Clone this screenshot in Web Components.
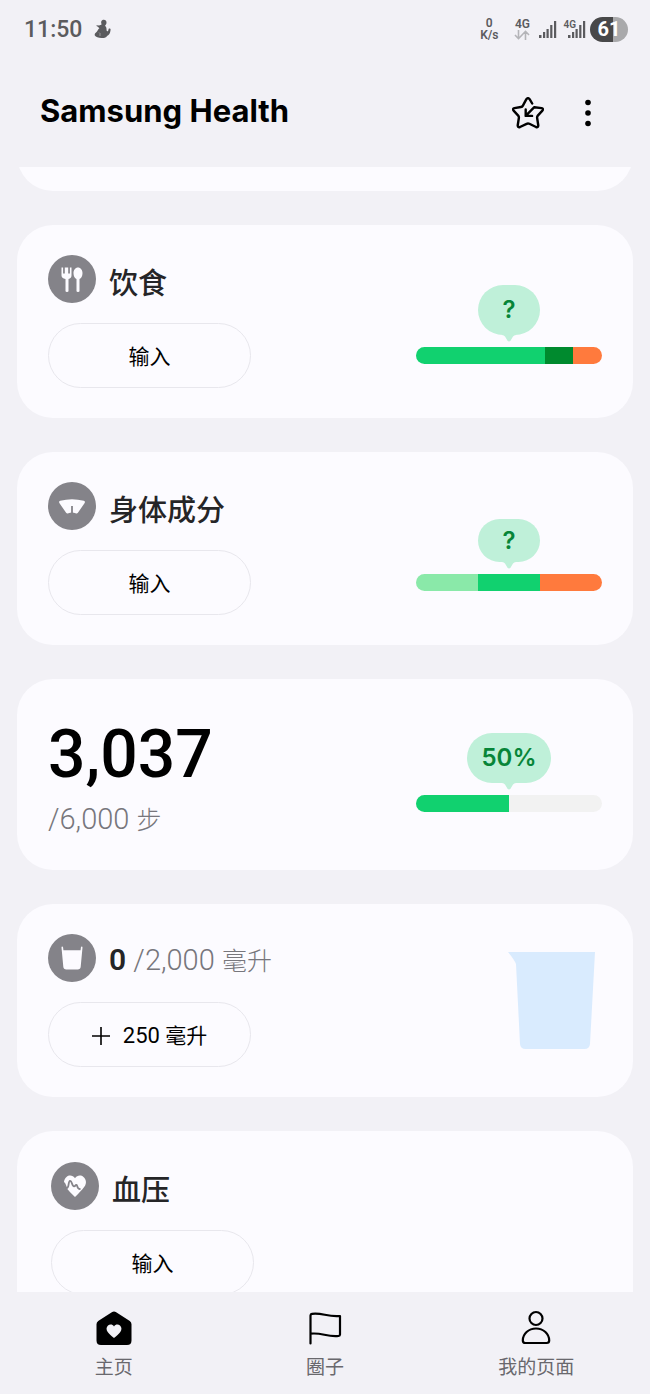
<!DOCTYPE html>
<html lang="zh-CN">
<head>
<meta charset="utf-8">
<meta name="viewport" content="width=device-width, initial-scale=1">
<title>Samsung Health</title>
<style>
  body {
    margin: 0;
    background: #f2f1f6;
    font-family: Roboto, "Noto Sans CJK SC", sans-serif;
    color: #252527;
  }
</style>
</head>
<body>
<health-app></health-app>

<script>
const ICONS = {
  food: `<svg viewBox="0 0 48 48" width="48" height="48"><circle cx="24" cy="24" r="24" fill="#848389"/>
    <g fill="#fcfbff"><path d="M13.5 12.5h1.6v6h1.7v-6h3.4v6h1.7v-6h1.6v8q0 2.6-3 3.4V36q0 1-1.500 1t-1.500-1V23.900q-4-.8-4-3.400z"/>
    <path d="M30 12.500c2.600 0 4.500 2.500 4.500 5.700 0 3-1.300 5-3 5.700V36q0 1-1.500 1t-1.500-1V23.900c-1.700-.7-3-2.700-3-5.700 0-3.200 1.900-5.700 4.500-5.700z"/></g></svg>`,
  body: `<svg viewBox="0 0 48 48" width="48" height="48"><circle cx="24" cy="24" r="24" fill="#848389"/>
    <path fill="#fcfbff" d="M11.500 21.200q-1.200-1.600.7-2.500 11.800-3 23.600 0 1.900.9.700 2.500l-6.600 9.600q-.9 1.200-2.300.5-3.600-1.800-7.200 0-1.400.7-2.300-.5z"/>
    <path stroke="#848389" stroke-width="1.800" d="M24 24v8"/></svg>`,
  water: `<svg viewBox="0 0 48 48" width="48" height="48"><circle cx="24" cy="24" r="24" fill="#848389"/>
    <path fill="#fcfbff" d="M13.500 13.500q0-.9.700-.9t.9.900l.3 2.700h17.200l.3-2.700q.2-.9.900-.9t.7.900l-1.800 19.300q-.3 2.700-3 2.700H18.300q-2.700 0-3-2.700z"/></svg>`,
  heart: `<svg viewBox="0 0 48 48" width="48" height="48"><circle cx="24" cy="24" r="24" fill="#848389"/>
    <path fill="#fcfbff" d="M24 16.300c2-3.200 6-3.400 8.500-1.400 3 2.500 3.300 6.700.8 9.900-2.300 3.200-5.300 6.200-9.300 10.300-4-4-7-7-9.300-10.300-2.500-3.200-2.200-7.400.8-9.900 2.500-2 6.500-1.800 8.500 1.400z"/>
    <path fill="none" stroke="#848389" stroke-width="1.800" stroke-linejoin="round" stroke-linecap="round" d="M12.500 21c2 0 1.500 5.200 3.500 5 2.300-.2 1-7 3-7.200 2.300 0 1.700 5.500 4 5.500 1.800 0 1-1.500 2.400-1.300 1.300.2.600 4 3.400 4"/></svg>`,
  home: `<svg viewBox="0 0 36 36" width="36" height="36"><path fill="#000" d="M15.800 2.200q2.200-1.500 4.400 0l13.600 8.900q1.700 1.200 1.700 3.200v16.200q0 4.500-4.500 4.500H5q-4.500 0-4.500-4.500V14.300q0-2 1.700-3.200z"/>
    <path fill="#f2f1f6" d="M18 16.500c1.400-2.300 4.300-2.400 6-.9 1.800 1.600 2 4.300.3 6.300-1.600 2-3.600 3.900-6.300 6.200-2.700-2.300-4.700-4.200-6.300-6.200-1.700-2-1.500-4.700.3-6.300 1.700-1.500 4.600-1.400 6 .9z"/></svg>`,
  flag: `<svg viewBox="0 0 36 36" width="36" height="36"><path fill="none" stroke="#000" stroke-width="2.200" stroke-linecap="round" stroke-linejoin="round" d="M3.500 33.500V5.500q0-1.500 1.500-1.700c10-1.500 15.500 3.500 28 2.200v18.500q0 1.300-1.500 1.500c-11.500 1.300-17-3.800-28-2.300"/></svg>`,
  person: `<svg viewBox="0 0 36 36" width="36" height="36"><g fill="none" stroke="#000" stroke-width="2.200"><circle cx="18" cy="8.500" r="6.500"/>
    <path stroke-linejoin="round" d="M4.800 30.500c0-6.500 5.700-12 13.200-12s13.200 5.500 13.200 12q0 2.500-2.500 2.500H7.300q-2.500 0-2.500-2.500z"/></g></svg>`
};

class StatusBar extends HTMLElement {
  constructor() {
    super();
    this.attachShadow({ mode: 'open' });
    this.shadowRoot.innerHTML = `
      <style>
        :host {
          display: flex;
          align-items: center;
          justify-content: space-between;
          height: 58px;
          padding: 0 22px 0 24px;
          color: #5b5b5e;
        }
        .side { display: flex; align-items: center; }
        svg { display: block; }
        .time { font-size: 23px; font-weight: 500; margin-right: 12px; }
        .speed, .net {
          font-size: 12px;
          line-height: 12px;
          font-weight: 600;
          text-align: center;
        }
        .speed { margin-right: 16px; }
        .net { margin-right: 9px; }
        .net svg { margin: 0 auto; }
        .second { display: flex; align-items: flex-start; margin: 0 4px 0 6px; }
        .second span { font-size: 10px; line-height: 10px; font-weight: 600; }
        .second svg { margin-left: -8px; }
        .battery {
          width: 38px;
          line-height: 25px;
          border-radius: 13px;
          background: linear-gradient(90deg, #484849 61%, #a9a9ab 61%);
          color: #fff;
          font-size: 20px;
          font-weight: 700;
          text-align: center;
        }
      </style>
      <div class="side">
        <span class="time">11:50</span>
        <svg viewBox="0 0 17 20" width="17" height="20" fill="#5b5b5e"><path d="M8.500 1c2-1 4.200.3 4 2.700 0 1.400-1 2.200-1.500 3 2 1.500 1.300 3.300 1.700 5 .8.900 1.400.6 1.700-.7.200-1 .4-1.500 1.400-1.400.9.100.9 1.100.6 2.300-.5 2.800-1.600 4.400-3.400 5-.7 1.500-2.200 2-4.700 2-3.800.1-6.300-.6-7.500-2.400C.2 15 1.700 13.800 3 12.600c.7-.8 1-2.200 2.400-3.300L3.500 7.500c-.8-.2-1.300-.6-.9-1.200l2.500.2C5.800 5.800 7.300 6 7.600 5.200 6.800 3.500 7 1.700 8.500 1z"/><path stroke="#a9a9ab" stroke-width=".8" fill="none" d="M5 13.500l1.500 1.500M5 16h2"/></svg>
      </div>
      <div class="side">
        <div class="speed">0<br>K/s</div>
        <div class="net">4G
          <svg viewBox="0 0 16 10" width="16" height="10" fill="none" stroke="#b4b4b8" stroke-width="1.600"><path d="M4.500 0v8.500M1 5l3.500 3.700L8 5M11.500 10V1.500M8 5l3.500-3.700L15 5"/></svg>
        </div>
        <svg viewBox="0 0 18 18" width="18" height="18" fill="#5b5b5e"><path d="M0 15h2.500v3H0zM4 12h2.200v6H4zM7.500 9h2.200v9H7.500zM11.200 5h2.200v13h-2.200zM15 1h2.200v17H15z"/></svg>
        <div class="second">
          <span>4G</span>
          <svg viewBox="0 0 18 18" width="18" height="18" fill="#5b5b5e"><path d="M0 15h2.500v3H0zM4 12h2.200v6H4zM7.500 9h2.200v9H7.500zM11.200 5h2.200v13h-2.200zM15 1h2.200v17H15z"/></svg>
        </div>
        <div class="battery">61</div>
      </div>
    `;
  }
}

class AppHeader extends HTMLElement {
  constructor() {
    super();
    this.attachShadow({ mode: 'open' });
    this.shadowRoot.innerHTML = `
      <style>
        :host {
          display: flex;
          align-items: center;
          height: 109px;
          padding: 0 46px 0 40px;
        }
        h1 {
          flex: 1;
          margin: 0 0 4px;
          font-family: Inter, sans-serif;
          font-size: 31px;
          font-weight: 700;
          color: #000;
        }
        button {
          display: block;
          padding: 0;
          border: none;
          background: none;
          cursor: pointer;
        }
        .more { margin-left: 28px; }
        svg { display: block; }
      </style>
      <h1><slot></slot></h1>
      <button aria-label="收藏">
        <svg viewBox="0 0 32 32" width="32" height="32" fill="none" stroke="#000" stroke-width="2.400" stroke-linecap="round" stroke-linejoin="round"><path d="M20.200 6.500 17.600 2.200q-1.600-2.100-3.200 0l-3.500 6.400q-.6 1.200-2 1.400l-6.500 1.100q-2.300.6-.8 2.500l4.600 5q.8.900.7 2.200L5.700 28.500q.1 2.300 2.300 1.500l6.600-3.200q1.400-.7 2.800 0L24 30q2.200.8 2.300-1.500l-1.200-7.700q-.1-1.300.7-2.200l4.600-5q1.500-1.900-.8-2.500L22.300 10.200 13.700 18.800M13.700 12.500v6.400h6.400"/></svg>
      </button>
      <button class="more" aria-label="更多">
        <svg viewBox="0 0 32 32" width="32" height="32"><circle cx="16" cy="5.500" r="2.800"/><circle cx="16" cy="16" r="2.800"/><circle cx="16" cy="26.500" r="2.800"/></svg>
      </button>
    `;
  }
}

class HealthCard extends HTMLElement {
  constructor() {
    super();
    this.attachShadow({ mode: 'open' });
    const icon = ICONS[this.getAttribute('icon')] || '';
    this.shadowRoot.innerHTML = `
      <style>
        :host {
          display: flex;
          justify-content: space-between;
          padding: 30px 31px;
          border-radius: 36px;
          background: #fcfbff;
        }
        :host([inset]) { padding: 31px 34px; }
        .main { display: flex; flex-direction: column; gap: 20px; }
        .head { display: flex; align-items: center; gap: 13px; }
        .head:not(.has-icon) { display: none; }
        svg { display: block; }
        h2 {
          margin: 10px 0 0;
          font-size: 29px;
          line-height: 36px;
          font-weight: 500;
        }
        :host([measure]) h2 { margin-top: 6px; }
      </style>
      <div class="main">
        <div class="head ${icon ? 'has-icon' : ''}">${icon}<h2><slot name="title"></slot></h2></div>
        <slot></slot>
      </div>
      <slot name="chart"></slot>
    `;
  }
}

class PillButton extends HTMLElement {
  constructor() {
    super();
    this.attachShadow({ mode: 'open' });
    this.shadowRoot.innerHTML = `
      <style>
        :host { display: block; }
        button {
          display: flex;
          align-items: center;
          justify-content: center;
          gap: 13px;
          width: 203px;
          height: 65px;
          padding: 2px 0 0;
          border: 1px solid #e8e7ed;
          border-radius: 33px;
          background: none;
          font: inherit;
          font-size: 21px;
          line-height: 30px;
          color: #000;
          cursor: pointer;
        }
      </style>
      <button>
        ${this.hasAttribute('plus') ? '<svg viewBox="0 0 18 18" width="18" height="18" stroke="#000" stroke-width="1.600"><path d="M9 0v18M0 9h18"/></svg>' : ''}
        <span><slot></slot></span>
      </button>
    `;
  }
}

// parts="color:grow,color:grow"
class GaugeBar extends HTMLElement {
  constructor() {
    super();
    this.attachShadow({ mode: 'open' });
    const parts = this.getAttribute('parts').split(',').map(p => {
      const [color, grow] = p.split(':');
      return `<i style="flex:${grow};background:${color}"></i>`;
    }).join('');
    this.shadowRoot.innerHTML = `
      <style>
        :host {
          display: flex;
          flex-direction: column;
          align-items: center;
          align-self: flex-end;
          gap: 12px;
          width: 186px;
          padding-bottom: 24px;
        }
        :host([raised]) { padding-bottom: 28px; }
        .bubble {
          position: relative;
          box-sizing: border-box;
          min-width: 62px;
          padding: 0 14px;
          border-radius: 25px;
          background: #bff0d9;
          color: #078538;
          font-family: Inter, sans-serif;
          font-size: 24px;
          line-height: 50px;
          font-weight: 600;
          text-align: center;
        }
        :host([compact]) .bubble { line-height: 43px; }
        .bubble svg {
          position: absolute;
          top: 100%;
          left: 50%;
          margin: -1px 0 0 -7px;
        }
        .bar {
          display: flex;
          width: 100%;
          height: 17px;
          border-radius: 9px;
          overflow: hidden;
        }
      </style>
      <div class="bubble"><slot></slot><svg viewBox="0 0 14 8" width="14" height="8" fill="#bff0d9"><path d="M0 0h14v1q-2 .4-3 1.600L8.500 6.800q-1.500 1.600-3 0L3 2.600Q2 1.400 0 1z"/></svg></div>
      <div class="bar">${parts}</div>
    `;
  }
}

class StepCount extends HTMLElement {
  constructor() {
    super();
    this.attachShadow({ mode: 'open' });
    this.shadowRoot.innerHTML = `
      <style>
        :host { display: block; padding-top: 9px; }
        .value { font-size: 66px; line-height: 74px; font-weight: 500; color: #000; }
        .goal { padding-top: 11px; line-height: 33px; }
      </style>
      <div class="value"><slot></slot></div>
      <div class="goal"><slot name="goal"></slot></div>
    `;
  }
}

class WaterCup extends HTMLElement {
  constructor() {
    super();
    this.attachShadow({ mode: 'open' });
    this.shadowRoot.innerHTML = `
      <style>
        :host { display: block; padding: 18px 7px 0 0; }
        svg { display: block; }
      </style>
      <svg viewBox="0 0 87 98" width="87" height="98"><path fill="#d9ebfe" d="M0 0h87l-5 92q-.5 5-5.500 5h-59q-5 0-5.500-5L8 12Q6.500 8 0 0z"/></svg>
    `;
  }
}

class NavItem extends HTMLElement {
  constructor() {
    super();
    this.attachShadow({ mode: 'open' });
    this.shadowRoot.innerHTML = `
      <style>
        :host { display: block; flex: 1; }
        a {
          display: flex;
          flex-direction: column;
          align-items: center;
          gap: 8px;
          padding-top: 18px;
          font-size: 19px;
          line-height: 28px;
          color: #69686d;
          text-decoration: none;
        }
        svg { display: block; }
      </style>
      <a href="#${this.getAttribute('icon')}">${ICONS[this.getAttribute('icon')]}<span><slot></slot></span></a>
    `;
  }
}

class HealthApp extends HTMLElement {
  constructor() {
    super();
    this.attachShadow({ mode: 'open' });
    this.shadowRoot.innerHTML = `
      <style>
        :host { display: flex; flex-direction: column; height: 100vh; }
        status-bar, app-header, nav { flex: none; }
        main {
          flex: 1;
          min-height: 0;
          display: flex;
          flex-direction: column;
          gap: 34px;
          padding: 0 17px;
          overflow-y: auto;
          scrollbar-width: none;
        }
        main > * { flex: none; }
        /* card already scrolled up under the header */
        .passed { box-sizing: border-box; height: 193px; margin-top: -169px; }
        .goal { font-size: 29px; font-weight: 300; color: #77767c; }
        .cjk { font-size: 25px; }
        .zero { font-weight: 600; font-size: 30px; }
        .num { font-size: 22px; }
        nav { display: flex; height: 102px; padding: 0 8px; }
      </style>
      <status-bar></status-bar>
      <app-header>Samsung Health</app-header>
      <main>
        <health-card class="passed"></health-card>
        <health-card icon="food">
          <span slot="title">饮食</span>
          <pill-button>输入</pill-button>
          <gauge-bar slot="chart" parts="#11d16f:9,#008a2e:2,#ff7a3d:2">?</gauge-bar>
        </health-card>
        <health-card icon="body">
          <span slot="title">身体成分</span>
          <pill-button>输入</pill-button>
          <gauge-bar slot="chart" compact parts="#8ae9a9:1,#11d16f:1,#ff7a3d:1">?</gauge-bar>
        </health-card>
        <health-card>
          <step-count>3,037<span slot="goal" class="goal">/6,000 <span class="cjk">步</span></span></step-count>
          <gauge-bar slot="chart" raised parts="#11d16f:1,#f2f2f2:1">50%</gauge-bar>
        </health-card>
        <health-card icon="water" measure>
          <span slot="title"><span class="zero">0</span> <span class="goal">/2,000 <span class="cjk">毫升</span></span></span>
          <pill-button plus><span class="num">250</span> 毫升</pill-button>
          <water-cup slot="chart"></water-cup>
        </health-card>
        <health-card icon="heart" inset>
          <span slot="title">血压</span>
          <pill-button>输入</pill-button>
        </health-card>
      </main>
      <nav>
        <nav-item icon="home">主页</nav-item>
        <nav-item icon="flag">圈子</nav-item>
        <nav-item icon="person">我的页面</nav-item>
      </nav>
    `;
  }
}

customElements.define('status-bar', StatusBar);
customElements.define('app-header', AppHeader);
customElements.define('pill-button', PillButton);
customElements.define('gauge-bar', GaugeBar);
customElements.define('step-count', StepCount);
customElements.define('water-cup', WaterCup);
customElements.define('health-card', HealthCard);
customElements.define('nav-item', NavItem);
customElements.define('health-app', HealthApp);
</script>
</body>
</html>
